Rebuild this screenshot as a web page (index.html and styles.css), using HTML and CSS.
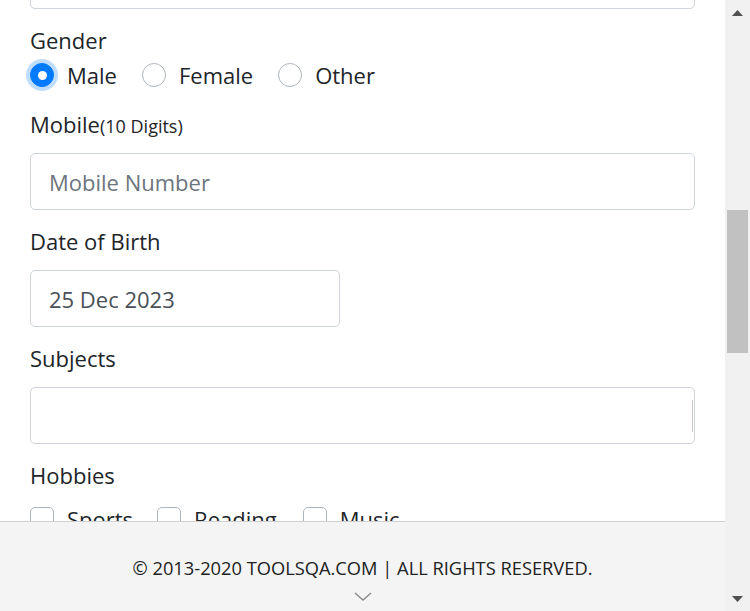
FILE: index.html
```html
<!DOCTYPE html>
<html lang="en">
<head>
<meta charset="utf-8">
<title>Practice Form</title>
<link rel="stylesheet" href="styles.css">
</head>
<body>
<div class="viewport">
  <div class="main">
    <div class="content">
      <div class="scroll">
        <div class="input input-partial"></div>

        <div class="label label-first">Gender</div>
        <div class="radios">
          <label class="radio-item"><span class="radio checked"></span><span>Male</span></label>
          <label class="radio-item"><span class="radio"></span><span>Female</span></label>
          <label class="radio-item"><span class="radio"></span><span>Other</span></label>
        </div>

        <div class="label label-mobile">Mobile<small>(10 Digits)</small></div>
        <div class="input"><span class="placeholder">Mobile Number</span></div>

        <div class="label">Date of Birth</div>
        <div class="input input-date"><span class="value">25 Dec 2023</span></div>

        <div class="label">Subjects</div>
        <div class="input input-subjects"><span class="inner-line"></span></div>

        <div class="label">Hobbies</div>
        <div class="checks">
          <label class="check-item"><span class="check"></span><span>Sports</span></label>
          <label class="check-item check-reading"><span class="check"></span><span>Reading</span></label>
          <label class="check-item"><span class="check"></span><span>Music</span></label>
        </div>
      </div>
    </div>
    <footer class="footer">
      <div class="copyright">© 2013-2020 TOOLSQA.COM | ALL RIGHTS RESERVED.</div>
      <svg class="chevron" width="18" height="10" viewBox="0 0 18 10"><path d="M1 1 L9 8 L17 1" fill="none" stroke="#8a8a8a" stroke-width="1.4"/></svg>
    </footer>
  </div>
  <div class="scrollbar">
    <div class="sb-arrow"><svg width="11" height="6" viewBox="0 0 11 6"><path d="M0 6 L5.5 0 L11 6 Z" fill="#505050"/></svg></div>
    <div class="sb-track">
      <div class="sb-thumb"></div>
    </div>
    <div class="sb-arrow"><svg width="11" height="6" viewBox="0 0 11 6"><path d="M0 0 L5.5 6 L11 0 Z" fill="#505050"/></svg></div>
  </div>
</div>
</body>
</html>
```
FILE: styles.css
```css
* { box-sizing: border-box; }
html, body { margin: 0; padding: 0; }
body {
  font-family: "Open Sans", "Noto Sans", sans-serif;
  color: #212529;
  background: #fff;
}
.viewport {
  width: 750px;
  height: 611px;
  display: flex;
  overflow: hidden;
}
.main {
  width: 725px;
  display: flex;
  flex-direction: column;
}
.content {
  flex: 1;
  overflow: hidden;
  padding: 0 30px;
}
.scroll {
  margin-top: -48px;
}
.label {
  font-size: 22px;
  line-height: 30px;
  margin-top: 16px;
  margin-bottom: 14px;
}
.label-first { margin-top: 16px; margin-bottom: 4px; }
.label-mobile { margin-top: 18px; margin-bottom: 12px; }
.label small { font-size: 18px; }
.input {
  height: 57px;
  border: 1px solid #ced4da;
  border-radius: 5px;
  display: flex;
  align-items: center;
  padding: 0 18px;
  font-size: 22px;
  position: relative;
}
.input-date { width: 310px; }
.placeholder { color: #6c757d; }
.value { color: #495057; }
.inner-line {
  position: absolute;
  right: 1px;
  top: 12px;
  height: 32px;
  width: 1px;
  background: #c9c9c9;
}
.radios {
  display: flex;
  align-items: center;
  height: 32px;
}
.radio-item {
  display: flex;
  align-items: center;
  font-size: 22px;
  margin-right: 25px;
}
.radio {
  width: 24px;
  height: 24px;
  border-radius: 50%;
  border: 1px solid #adb5bd;
  background: #fff;
  margin-right: 13px;
  display: flex;
  align-items: center;
  justify-content: center;
}
.radio.checked {
  background: #007bff;
  border-color: #007bff;
  box-shadow: 0 0 0 4px rgba(0, 123, 255, 0.25);
}
.radio.checked::after {
  content: "";
  width: 9px;
  height: 9px;
  border-radius: 50%;
  background: #fff;
}
.checks {
  display: flex;
  align-items: center;
  margin-top: 10px;
}
.check-item {
  display: flex;
  align-items: center;
  font-size: 22px;
  margin-right: 24px;
}
.check-reading { margin-right: 26px; }
.check {
  width: 24px;
  height: 24px;
  border: 1px solid #adb5bd;
  border-radius: 5px;
  margin-right: 13px;
}
.footer {
  height: 90px;
  flex-shrink: 0;
  background: #f4f4f4;
  border-top: 1px solid #d0d0d0;
  display: flex;
  flex-direction: column;
  align-items: center;
  padding-top: 35px;
}
.copyright {
  font-size: 18.3px;
  line-height: 22px;
  color: #222;
}
.chevron {
  margin-top: 13px;
}
.scrollbar {
  width: 25px;
  background: #f1f1f1;
  display: flex;
  flex-direction: column;
}
.sb-arrow {
  height: 25px;
  display: flex;
  align-items: center;
  justify-content: center;
}
.sb-track {
  flex: 1;
  padding-top: 185px;
}
.sb-thumb {
  margin: 0 2px;
  height: 143px;
  background: #c1c1c1;
}
```
